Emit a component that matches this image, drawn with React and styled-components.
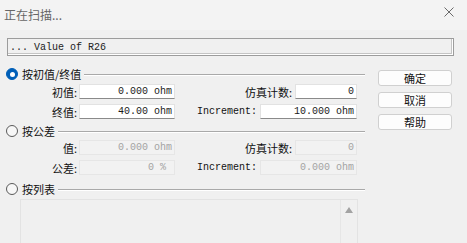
import React from 'react';
import styled, { createGlobalStyle } from 'styled-components';

const GlobalStyle = createGlobalStyle`
	html, body {
		margin: 0;
		padding: 0;
		background: #f0f0f0;
	}
	* {
		box-sizing: border-box;
	}
`;

const cjk = `"Noto Sans CJK SC", "Liberation Sans", sans-serif`;
const mono = `"Liberation Mono", "Noto Sans CJK SC", monospace`;

const Window = styled.div`
	width: 467px;
	height: 243px;
	overflow: hidden;
	background: #f0f0f0;
	font-family: ${cjk};
	color: #111;
`;

const TitleBar = styled.div`
	height: 30px;
	display: flex;
	align-items: center;
	justify-content: space-between;
	padding: 0 13px 2px 4px;
	background: #f3f3f3;
`;

const Title = styled.span`
	font-size: 12px;
	color: #666;
`;

const Close = styled.svg`
	width: 10px;
	height: 10px;
	margin-top: -4px;
`;

const Body = styled.div`
	padding: 8px 0 0 0;
`;

const StatusBox = styled.div`
	margin-left: 7px;
	width: 447px;
	height: 18px;
	border: 1px solid #9c9c9c;
	box-shadow: inset -1px -1px 0 #fff, inset -2px -2px 0 #c4c4c4;
	display: flex;
	align-items: center;
	padding-left: 2px;
	font-family: ${mono};
	font-size: 10px;
	color: #222;
	white-space: pre;
`;

const Main = styled.div`
	display: flex;
	gap: 13px;
`;

const Left = styled.div`
	width: 365px;
	display: flex;
	flex-direction: column;
`;

const GroupHeader = styled.div`
	height: 16px;
	margin-top: ${({ top }) => top}px;
	display: flex;
	align-items: center;
	padding-left: 6px;
`;

const Radio = styled.span`
	width: 12px;
	height: 12px;
	border-radius: 50%;
	flex: none;
	background: ${({ checked }) => (checked ? '#005fb8' : '#f7f7f7')};
	border: 1px solid ${({ checked }) => (checked ? '#005fb8' : '#5a5a5a')};
	display: flex;
	align-items: center;
	justify-content: center;
	&::after {
		content: '';
		display: ${({ checked }) => (checked ? 'block' : 'none')};
		width: 5px;
		height: 5px;
		border-radius: 50%;
		background: #fff;
	}
`;

const GroupLabel = styled.span`
	margin-left: 4px;
	font-size: 11px;
	line-height: 16px;
	white-space: nowrap;
`;

const Rule = styled.span`
	flex: 1;
	margin-left: 3px;
	height: 1px;
	background: #a9a9a9;
	box-shadow: 0 1px 0 #fff;
`;

const FieldRow = styled.div`
	width: 357px;
	height: 15px;
	margin-top: ${({ top }) => top}px;
	display: flex;
	align-items: center;
`;

const LeftField = styled.div`
	width: 175px;
	display: flex;
	align-items: center;
`;

const RightField = styled.div`
	flex: 1;
	display: flex;
	align-items: center;
	justify-content: flex-end;
	gap: 3px;
`;

const Label = styled.span`
	font-family: ${({ latin }) => (latin ? mono : cjk)};
	font-size: ${({ latin }) => (latin ? 10 : 11)}px;
	white-space: nowrap;
	text-align: right;
	width: ${({ width }) => (width ? `${width}px` : 'auto')};
	margin-right: ${({ width }) => (width ? 2 : 0)}px;
`;

const Input = styled.div`
	width: ${({ width }) => width}px;
	height: 15px;
	display: flex;
	align-items: center;
	justify-content: flex-end;
	padding-right: ${({ pad }) => pad ?? 2}px;
	font-family: ${mono};
	font-size: 10px;
	white-space: pre;
	background: ${({ disabled }) => (disabled ? '#f2f2f2' : '#fff')};
	color: ${({ disabled }) => (disabled ? '#a3a3a3' : '#1a1a1a')};
	border: 1px solid ${({ disabled }) => (disabled ? '#e6e6e6' : '#e2e2e2')};
	border-bottom-color: ${({ disabled }) => (disabled ? '#e6e6e6' : '#8a8a8a')};
`;

const ListBox = styled.div`
	margin: 2px 0 0 20px;
	width: 338px;
	height: 60px;
	border: 1px solid #e3e3e3;
	border-bottom: none;
	display: flex;
	justify-content: flex-end;
`;

const ScrollBar = styled.div`
	width: 17px;
	border-left: 1px solid #e6e6e6;
	display: flex;
	justify-content: center;
	padding-top: 7px;
`;

const Arrow = styled.span`
	width: 0;
	height: 0;
	border-left: 4px solid transparent;
	border-right: 4px solid transparent;
	border-bottom: 6px solid #a3a3a3;
`;

const Buttons = styled.div`
	display: flex;
	flex-direction: column;
	gap: 6px;
	margin-top: 14px;
`;

const Button = styled.div`
	width: 74px;
	height: 16px;
	border: 1px solid #d0d0d0;
	border-radius: 3px;
	background: #fdfdfd;
	font-size: 11px;
	display: flex;
	align-items: center;
	justify-content: center;
`;

export default function App() {
	return (
		<Window>
			<GlobalStyle />
			<TitleBar>
				<Title>正在扫描...</Title>
				<Close viewBox="0 0 10 10">
					<path d="M0.5 0.5 L9.5 9.5 M9.5 0.5 L0.5 9.5" stroke="#6a6a6a" strokeWidth="1" />
				</Close>
			</TitleBar>
			<Body>
				<StatusBox>... Value of R26</StatusBox>
				<Main>
					<Left>
						<GroupHeader top={10}>
							<Radio checked />
							<GroupLabel>按初值/终值</GroupLabel>
							<Rule />
						</GroupHeader>
						<FieldRow top={2}>
							<LeftField>
								<Label width={77}>初值:</Label>
								<Input width={96}>0.000 ohm</Input>
							</LeftField>
							<RightField>
								<Label>仿真计数:</Label>
								<Input width={62}>0</Input>
							</RightField>
						</FieldRow>
						<FieldRow top={5}>
							<LeftField>
								<Label width={77}>终值:</Label>
								<Input width={96}>40.00 ohm</Input>
							</LeftField>
							<RightField>
								<Label latin>Increment:</Label>
								<Input width={97}>10.000 ohm</Input>
							</RightField>
						</FieldRow>
						<GroupHeader top={4}>
							<Radio />
							<GroupLabel>按公差</GroupLabel>
							<Rule />
						</GroupHeader>
						<FieldRow top={1}>
							<LeftField>
								<Label width={77}>值:</Label>
								<Input width={96} disabled>0.000 ohm</Input>
							</LeftField>
							<RightField>
								<Label>仿真计数:</Label>
								<Input width={62} disabled>0</Input>
							</RightField>
						</FieldRow>
						<FieldRow top={5}>
							<LeftField>
								<Label width={77}>公差:</Label>
								<Input width={96} pad={8} disabled>0 %</Input>
							</LeftField>
							<RightField>
								<Label latin>Increment:</Label>
								<Input width={97} disabled>0.000 ohm</Input>
							</RightField>
						</FieldRow>
						<GroupHeader top={6}>
							<Radio />
							<GroupLabel>按列表</GroupLabel>
							<Rule />
						</GroupHeader>
						<ListBox>
							<ScrollBar>
								<Arrow />
							</ScrollBar>
						</ListBox>
					</Left>
					<Buttons>
						<Button>确定</Button>
						<Button>取消</Button>
						<Button>帮助</Button>
					</Buttons>
				</Main>
			</Body>
		</Window>
	);
}
